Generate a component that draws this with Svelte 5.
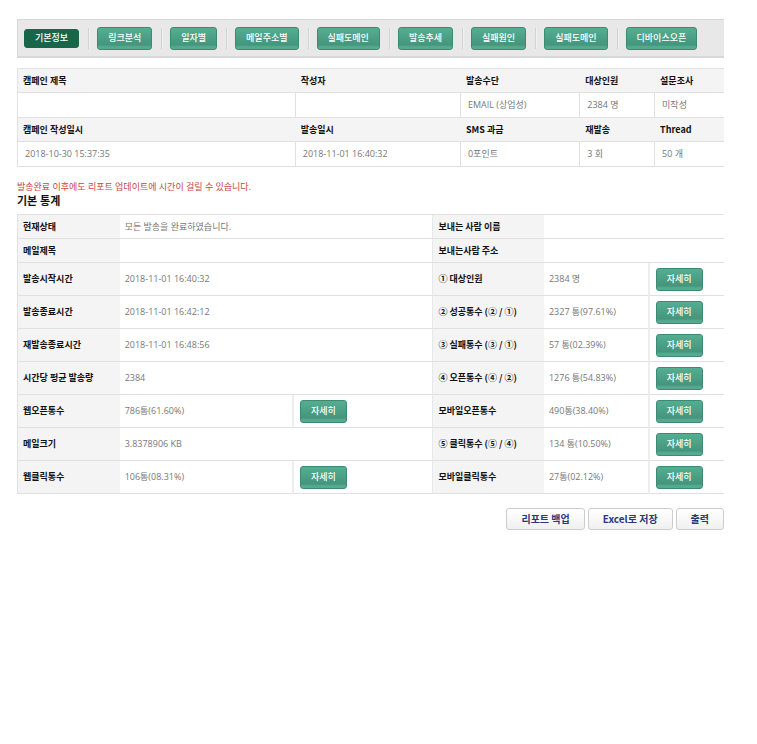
<script>
  const tabs = [
    '기본정보',
    '링크분석',
    '일자별',
    '메일주소별',
    '실패도메인',
    '발송추세',
    '실패원인',
    '실패도메인',
    '디바이스오픈'
  ];

  let active = $state(0);

  const campaign = [
    {
      heads: ['캠페인 제목', '작성자', '발송수단', '대상인원', '설문조사'],
      values: ['', '', 'EMAIL (상업성)', '2384 명', '미작성']
    },
    {
      heads: ['캠페인 작성일시', '발송일시', 'SMS 과금', '재발송', 'Thread'],
      values: ['2018-10-30 15:37:35', '2018-11-01 16:40:32', '0포인트', '3 회', '50 개']
    }
  ];

  const stats = [
    { left: ['현재상태', '모든 발송을 완료하였습니다.'], right: ['보내는 사람 이름', ''] },
    { left: ['메일제목', ''], right: ['보내는사람 주소', ''] },
    { left: ['발송시작시간', '2018-11-01 16:40:32'], right: ['① 대상인원', '2384 명', true] },
    { left: ['발송종료시간', '2018-11-01 16:42:12'], right: ['② 성공통수 (② / ①)', '2327 통(97.61%)', true] },
    { left: ['재발송종료시간', '2018-11-01 16:48:56'], right: ['③ 실패통수 (③ / ①)', '57 통(02.39%)', true] },
    { left: ['시간당 평균 발송량', '2384'], right: ['④ 오픈통수 (④ / ②)', '1276 통(54.83%)', true] },
    { left: ['웹오픈통수', '786통(61.60%)', true], right: ['모바일오픈통수', '490통(38.40%)', true] },
    { left: ['메일크기', '3.8378906 KB'], right: ['⑤ 클릭통수 (⑤ / ④)', '134 통(10.50%)', true] },
    { left: ['웹클릭통수', '106통(08.31%)', true], right: ['모바일클릭통수', '27통(02.12%)', true] }
  ];
</script>

{#snippet pair([label, value, detail])}
  <th scope="row">{label}</th>
  <td colspan={detail ? 1 : 2}>{value}</td>
  {#if detail}
    <td class="action"><button type="button" class="green">자세히</button></td>
  {/if}
{/snippet}

<main>
  <!-- TABS -->
  <nav>
    {#each tabs as tab, i}
      <button type="button" class="green" class:active={active === i} onclick={() => (active = i)}>{tab}</button>
    {/each}
  </nav>

  <!-- CAMPAIGN -->
  <table class="campaign">
    <colgroup>
      <col class="title" /><col class="writer" /><col class="method" /><col class="target" /><col />
    </colgroup>
    <tbody>
      {#each campaign as group}
        <tr>
          {#each group.heads as head}<th scope="col">{head}</th>{/each}
        </tr>
        <tr>
          {#each group.values as value}<td>{value}</td>{/each}
        </tr>
      {/each}
    </tbody>
  </table>

  <!-- STATISTICS -->
  <p class="notice">발송완료 이후에도 리포트 업데이트에 시간이 걸릴 수 있습니다.</p>
  <h2>기본 통계</h2>

  <table class="stats">
    <colgroup>
      <col class="label" /><col class="value" /><col class="more" />
      <col class="label-r" /><col class="value-r" /><col />
    </colgroup>
    <tbody>
      {#each stats as row}
        <tr class:tall={row.right[2]}>
          {@render pair(row.left)}
          {@render pair(row.right)}
        </tr>
      {/each}
    </tbody>
  </table>

  <div class="tools">
    <button type="button">리포트 백업</button>
    <button type="button">Excel로 저장</button>
    <button type="button">출력</button>
  </div>
</main>

<style>
  :global(body) {
    margin: 0;
    background: #fff;
  }

  main {
    padding: 19px 33px 32px 17px;
    font-family: 'Open Sans', 'Noto Sans CJK KR', sans-serif;
    font-size: 9px;
    line-height: 14px;
    color: #777;
  }

  button {
    box-sizing: border-box;
    font-family: 'Noto Sans CJK KR', sans-serif;
    cursor: pointer;
    white-space: nowrap;
  }

  .green {
    height: 23px;
    padding: 0 10px;
    border: 1px solid #3c8b70;
    border-radius: 3px;
    background: linear-gradient(#55ae92, #44957b 80%, #55ab90 90%);
    color: #fff;
    font-size: 9px;
    font-weight: 500;
    line-height: 14px;
  }

  /* Tabs */
  nav {
    box-sizing: border-box;
    display: flex;
    align-items: center;
    height: 39px;
    padding-left: 6px;
    border: solid #d8d8d8;
    border-width: 1px 0 2px 1px;
    background: #e8e8e8;
  }

  nav .green + .green {
    margin-left: 18px;
    position: relative;
  }

  nav .green + .green::before {
    content: '';
    position: absolute;
    left: -10px;
    top: 0;
    bottom: 0;
    border-left: 1px solid #d2d2d2;
    border-right: 1px solid #f0f0f0;
  }

  nav .active {
    height: 19px;
    border-color: #17664a;
    background: #17664a;
  }

  /* Tables */
  table {
    width: 100%;
    table-layout: fixed;
    border-collapse: separate;
    border-spacing: 0;
    border-top: 1px solid #e2e2e2;
    border-left: 1px solid #e2e2e2;
  }

  th,
  td {
    box-sizing: border-box;
    height: 24px;
    padding: 0 0 0 5px;
    border-bottom: 1px solid #e0e0e0;
    text-align: left;
    vertical-align: middle;
    white-space: nowrap;
    font-weight: 400;
  }

  th {
    background: #f4f4f4;
    color: #111;
    font-family: 'Noto Sans CJK KR', sans-serif;
    font-weight: 700;
  }

  .campaign { margin-top: 10px; }
  .campaign td { height: 25px; padding-left: 7px; }
  .campaign td + td { border-left: 1px solid #e0e0e0; }
  .campaign th + th { padding-left: 6px; }
  .campaign .title { width: 39.2%; }
  .campaign .writer { width: 23.4%; }
  .campaign .method { width: 16.9%; }
  .campaign .target { width: 10.6%; }

  .stats { margin-top: 6px; }
  .stats .tall > * { height: 33px; }
  .stats td + th { border-left: 1px solid #e6e9e9; }
  .stats .action { padding-left: 6px; border-left: 2px solid #eee; }
  .stats .action .green { display: block; }
  .stats .label { width: 14.4%; }
  .stats .value { width: 24.4%; }
  .stats .more { width: 19.9%; }
  .stats .label-r { width: 15.8%; }
  .stats .value-r { width: 14.7%; }

  .notice {
    margin: 13px 0 0;
    color: #c94444;
  }

  h2 {
    margin: 0;
    font-size: 11px;
    line-height: 14px;
    color: #111;
  }

  /* Tools */
  .tools {
    display: flex;
    justify-content: flex-end;
    gap: 3px;
    margin-top: 14px;
  }

  .tools button {
    height: 22px;
    padding: 0 14px;
    border: 1px solid #ccc;
    border-radius: 3px;
    background: linear-gradient(#fff, #f0f0f0);
    color: #29387c;
    font-size: 10px;
    font-weight: 700;
    line-height: 14px;
  }
</style>
